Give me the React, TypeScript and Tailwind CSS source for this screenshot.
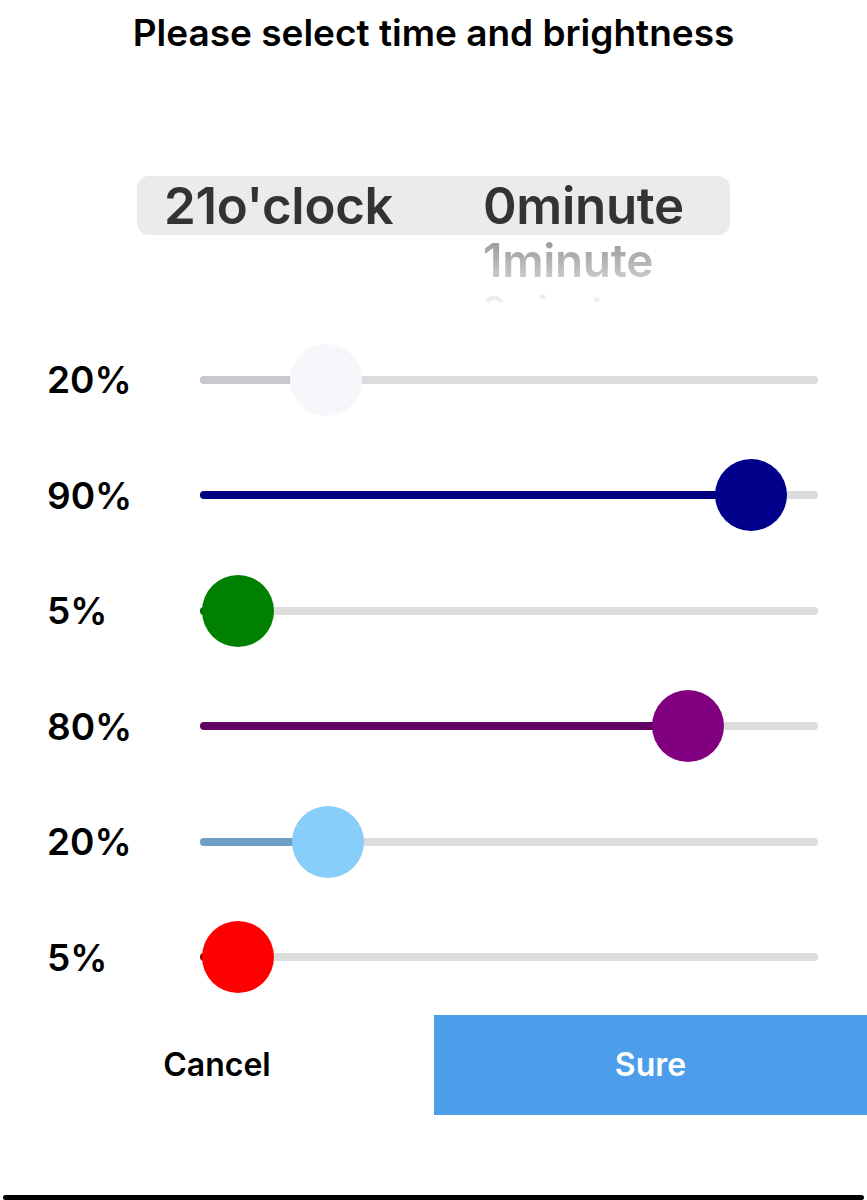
import React from 'react'

type Row = { label: string; pos: number; fill: string; thumb: string }

// thumb centre, measured from the track's left edge (track is 618px wide)
const rows: Row[] = [
  { label: '20%', pos: 126, fill: 'bg-[#c8c8ce]', thumb: 'bg-[#f7f7fb]' },
  { label: '90%', pos: 551, fill: 'bg-[#000080]', thumb: 'bg-[#00008b]' },
  { label: '5%', pos: 38, fill: 'bg-[#0b5d0b]', thumb: 'bg-[#008000]' },
  { label: '80%', pos: 488, fill: 'bg-[#600060]', thumb: 'bg-[#800080]' },
  { label: '20%', pos: 128, fill: 'bg-[#6c9fc6]', thumb: 'bg-[#87cefa]' },
  { label: '5%', pos: 38, fill: 'bg-[#a00000]', thumb: 'bg-[#ff0000]' },
]

function Slider({ row }: { row: Row }) {
  return (
    <div className="flex items-center h-[115.5px]">
      <div className="w-[200px] shrink-0 pl-[47px] text-[37px] font-semibold text-black leading-none">{row.label}</div>
      <div className="relative w-[618px] h-[8px] rounded-full bg-[#dcdcdf]">
        <div className={`absolute left-0 top-0 h-full rounded-full ${row.fill}`} style={{ width: row.pos }} />
        <div
          className={`absolute top-1/2 w-[72px] h-[72px] -translate-x-1/2 -translate-y-1/2 rounded-full ${row.thumb}`}
          style={{ left: row.pos }}
        />
      </div>
    </div>
  )
}

export default function App() {
  return (
    <div className="w-[867px] h-[1200px] bg-white flex flex-col font-['Inter',sans-serif] overflow-hidden">
      <h1 className="pt-[12px] text-center text-[37px] leading-[42px] font-semibold text-black">
        Please select time and brightness
      </h1>

      <div className="mt-[122px] mx-auto w-[593px] h-[126px] overflow-hidden">
        <div className="flex h-[59px] items-center rounded-[12px] bg-[#ebebed] text-[51px] leading-none font-semibold text-[#333333] tracking-[-0.3px]">
          <div className="w-[346px] shrink-0 pl-[27px]">21o'clock</div>
          <div>0minute</div>
        </div>
        <div className="flex h-[50px] items-center text-[46px] leading-none font-semibold tracking-[-0.3px]">
          <div className="w-[346px] shrink-0" />
          <div className="text-transparent bg-clip-text bg-gradient-to-b from-[#969696] to-[#d0d0d0]">1minute</div>
        </div>
        <div className="flex h-[40px] items-start text-[36px] leading-none font-semibold">
          <div className="w-[346px] shrink-0" />
          <div className="pt-[6px] text-[#ededed]">2minute</div>
        </div>
      </div>

      <div className="mt-[20px] flex flex-col">
        {rows.map((r, i) => <Slider key={i} row={r} />)}
      </div>

      <div className="flex h-[100px]">
        <button className="flex-1 flex items-center justify-center text-[32px] font-semibold text-black">Cancel</button>
        <button className="w-[433px] flex items-center justify-center bg-[#4d9eea] text-[32px] font-semibold text-white">Sure</button>
      </div>

      <div className="mt-auto mx-[3px] h-[5px] rounded-full bg-black" />
    </div>
  )
}
